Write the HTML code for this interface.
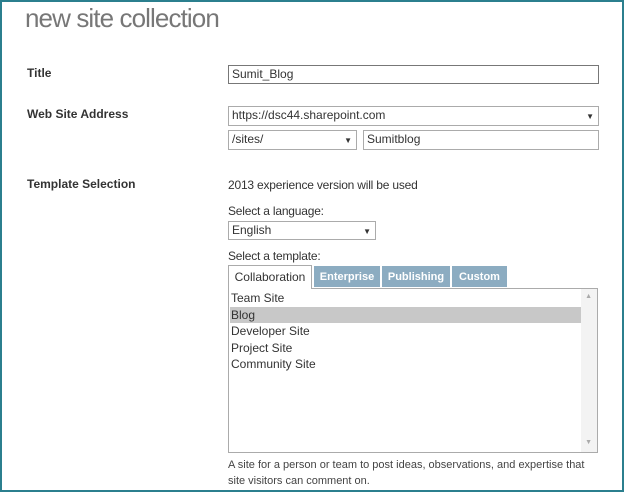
<!DOCTYPE html>
<html><head><style>
body{margin:0;width:624px;height:492px;overflow:hidden;background:#fff;font-family:"Liberation Sans",sans-serif;color:#444}
.frame{position:absolute;left:0;top:0;width:620px;height:488px;border:2px solid #2b7f8e;}
.a{position:absolute;white-space:nowrap}
.h{font-size:26px;color:#777;left:25px;top:3px;font-weight:300;letter-spacing:-0.9px}
.lb{font-size:12px;font-weight:bold;color:#333}
.t{font-size:12px;color:#333;letter-spacing:-0.2px}
.box{position:absolute;border:1px solid #ababab;background:#fff;font-size:12px;color:#333;box-sizing:border-box;padding:2px 3px;line-height:13px}
.arr{position:absolute;right:4px;top:3px;font-size:8px}
.tab{position:absolute;top:266px;height:21px;background:#8cacc1;color:#fff;font-size:11px;font-weight:bold;line-height:22px;text-align:center;box-sizing:border-box}
</style></head><body>
<div class="frame"></div>
<div class="a h">new site collection</div>
<div class="a lb" style="left:27px;top:66px">Title</div>
<div class="box" style="left:228px;top:65px;width:371px;height:19px;border-color:#777">Sumit_Blog</div>
<div class="a lb" style="left:27px;top:107px">Web Site Address</div>
<div class="box" style="left:228px;top:106px;width:371px;height:20px">https://dsc44.sharepoint.com<span class="arr">▼</span></div>
<div class="box" style="left:228px;top:130px;width:129px;height:20px">/sites/<span class="arr">▼</span></div>
<div class="box" style="left:363px;top:130px;width:236px;height:20px">Sumitblog</div>
<div class="a lb" style="left:27px;top:177px">Template Selection</div>
<div class="a t" style="left:228px;top:178px">2013 experience version will be used</div>
<div class="a t" style="left:228px;top:204px">Select a language:</div>
<div class="box" style="left:228px;top:221px;width:148px;height:19px">English<span class="arr">▼</span></div>
<div class="a t" style="left:228px;top:249px">Select a template:</div>
<div class="tab" style="left:228px;width:84px;height:24px;top:265px;background:#fff;color:#333;font-weight:normal;font-size:12px;border:1px solid #ababab;border-bottom:none;z-index:2">Collaboration</div>
<div class="tab" style="left:314px;width:66px">Enterprise</div>
<div class="tab" style="left:382px;width:68px">Publishing</div>
<div class="tab" style="left:452px;width:55px">Custom</div>
<div class="box" style="left:228px;top:288px;width:370px;height:165px;padding:0">
<div style="position:absolute;right:0;top:0;width:16px;height:163px;background:#f3f3f3"></div>
<div style="position:absolute;right:5px;top:1px;font-size:7px;color:#aaa">▲</div>
<div style="position:absolute;right:5px;bottom:3px;font-size:7px;color:#aaa">▼</div>
<div style="position:absolute;left:1px;top:1px;line-height:16.5px;font-size:12px;width:351px">
<div style="padding-left:1px">Team Site</div>
<div style="padding-left:1px;background:#c8c8c8">Blog</div>
<div style="padding-left:1px">Developer Site</div>
<div style="padding-left:1px">Project Site</div>
<div style="padding-left:1px">Community Site</div>
</div></div>
<div class="a" style="left:228px;top:457px;font-size:11px;line-height:16px;color:#444">A site for a person or team to post ideas, observations, and expertise that<br>site visitors can comment on.</div>
</body></html>
